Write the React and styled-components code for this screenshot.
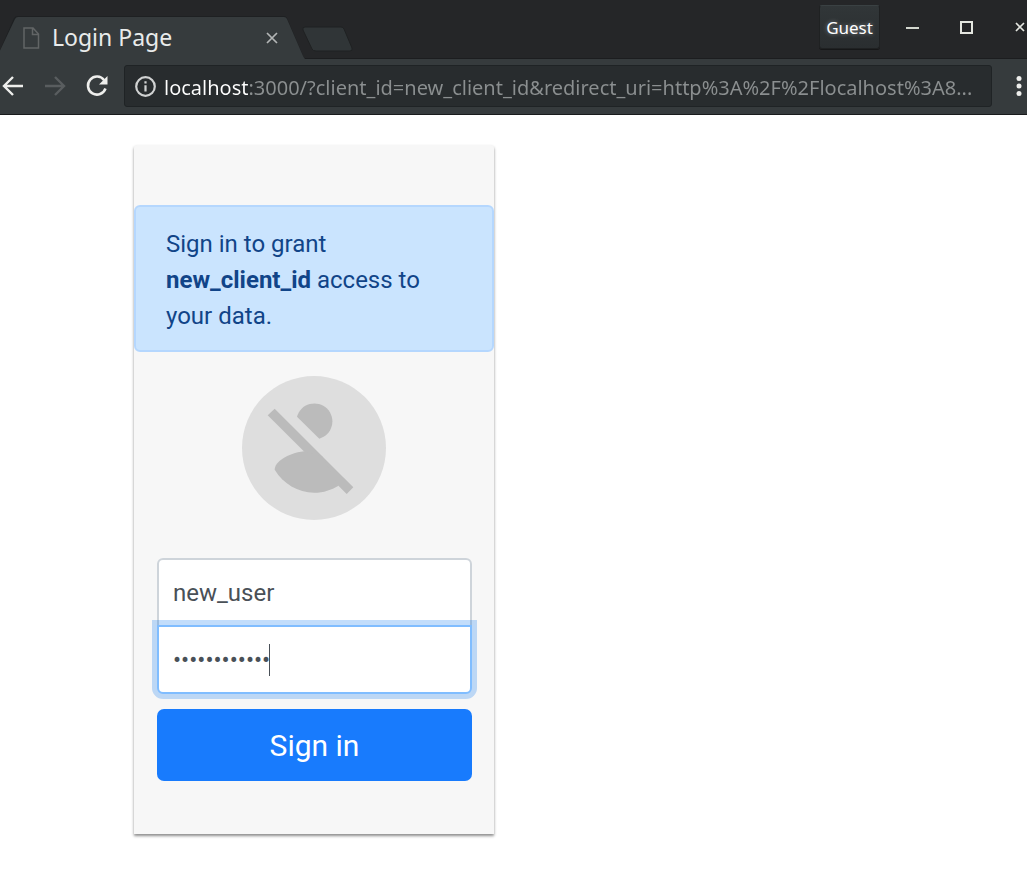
import React, { useState } from "react";
import styled, { createGlobalStyle } from "styled-components";

const GlobalStyle = createGlobalStyle`
  *, *::before, *::after { box-sizing: border-box; }
  body { margin: 0; background: #fff; font-family: Roboto, "Liberation Sans", sans-serif; }
  button, input { font: inherit; margin: 0; }
`;

/* Browser chrome */
const Chrome = styled.header`
  overflow: hidden;
  background: #363b3d;
  border-bottom: 1px solid #191b1c;
  font-family: "Noto Sans", sans-serif;
`;

const TitleBar = styled.div`
  display: flex;
  justify-content: space-between;
  height: 59px;
  background: #252628;
  box-shadow: inset 0 -1px #1c1d1f;
`;

const TabStrip = styled.div`
  display: flex;
  align-items: flex-end;
`;

const Tab = styled.div`
  position: relative;
  display: flex;
  align-items: center;
  gap: 12px;
  width: 306px;
  height: 43px;
  padding: 0 24px 0 23px;
`;

const TabShape = styled.svg`
  position: absolute;
  inset: 0;
`;

const PageIcon = styled.svg`
  position: relative;
  flex: none;
`;

const TabTitle = styled.span`
  position: relative;
  flex: 1;
  color: #e9ebeb;
  font-size: 23px;
  line-height: 43px;
  white-space: nowrap;
`;

const IconButton = styled.button`
  position: relative;
  display: flex;
  align-items: center;
  justify-content: center;
  flex: none;
  width: ${(p) => p.$width}px;
  height: 42px;
  padding: 0;
  border: 0;
  background: none;
  color: ${(p) => p.$color || "#eeeeec"};

  svg { flex: none; }
`;

const NewTab = styled(IconButton)`
  height: 40px;
  align-self: flex-end;
`;

const WindowControls = styled.div`
  display: flex;
  align-items: flex-start;
  gap: 5px;
  margin-right: -20px;
  padding-top: 5px;
`;

const ControlGroup = styled.div`
  display: flex;
  align-items: center;
  height: 44px;
`;

const GuestButton = styled.button`
  width: 61px;
  height: 44px;
  padding: 0;
  border: 1px solid #1f2122;
  border-top-color: #3a4143;
  border-radius: 3px;
  background: linear-gradient(#313638, #2a2e30);
  box-shadow: 0 1px #161718;
  color: #fff;
  font-size: 17px;
  text-shadow: 0 0 4px rgba(255, 255, 255, 0.45);
`;

const Toolbar = styled.div`
  display: flex;
  align-items: flex-start;
  gap: 6px;
  height: 55px;
  margin: 0 -13px 0 -8px;
  padding-top: 6px;
`;

const Nav = styled.nav`
  display: flex;
`;

const AddressBar = styled.label`
  display: flex;
  align-items: center;
  gap: 8px;
  flex: 1;
  min-width: 0;
  height: 42px;
  padding: 0 10px;
  border: 1px solid #1f2325;
  border-radius: 3px;
  background: #282c2e;
`;

const AddressInput = styled.input`
  flex: 1;
  min-width: 0;
  height: 40px;
  padding: 2px 0 0;
  border: 0;
  outline: 0;
  background: linear-gradient(to right, #fff 84px, #8b8f90 84px);
  background-clip: text;
  -webkit-background-clip: text;
  color: transparent;
  font-size: 20px;
  text-overflow: ellipsis;
`;

/* Login page */
const Page = styled.main`
  padding: 30px 24px 48px 134px;
`;

const Card = styled.section`
  width: 100%;
  max-width: 360px;
  padding: 60px 0 53px;
  border-radius: 3px 3px 0 0;
  background: #f7f7f7;
  box-shadow: 0 2px 3px rgba(0, 0, 0, 0.45);
`;

const Notice = styled.p`
  margin: 0 0 24px;
  padding: 19px 30px 16px;
  border: 2px solid #b5d7fe;
  border-radius: 6px;
  background: #cae4fe;
  color: #114488;
  font-size: 24px;
  line-height: 36px;
`;

const Avatar = styled.svg`
  display: block;
  margin: 0 auto 38px;
`;

const Form = styled.form`
  display: flex;
  flex-direction: column;
  margin: 0 22px 0 23px;
`;

const Field = styled.div`
  position: relative;
  margin-top: ${(p) => (p.$joined ? "-2px" : "0")};
`;

const TextInput = styled.input`
  display: block;
  width: 100%;
  height: 69px;
  padding: 0 14px;
  border: 2px solid #ced4da;
  border-radius: ${(p) => (p.$last ? "0 0 6px 6px" : "6px 6px 0 0")};
  outline: 0;
  background: #fff;
  caret-color: transparent;
  color: #495057;
  font-size: 24px;

  ${(p) =>
    p.$active &&
    `
    border-color: #80bdff;
    box-shadow: 0 0 0 5px rgba(0, 112, 240, 0.24);
  `}
`;

const Caret = styled.span`
  position: absolute;
  top: 19px;
  left: 112px;
  width: 1px;
  height: 32px;
  background: #495057;
`;

const SubmitButton = styled.button`
  height: 72px;
  margin-top: 15px;
  padding: 0;
  border: 0;
  border-radius: 7px;
  background: #187bfd;
  color: #fff;
  font-size: 30px;
`;

function BrowserChrome() {
  const [url, setUrl] = useState(
    "localhost:3000/?client_id=new_client_id&redirect_uri=http%3A%2F%2Flocalhost%3A8..."
  );
  return (
    <Chrome>
      <TitleBar>
        <TabStrip>
          <Tab>
            <TabShape width="306" height="43" viewBox="0 0 306 43" aria-hidden="true">
              <path d="M-4 43 L14 2 Q15 0 18 0 H284 Q286 0 287 2 L303 40 Q304 43 306 43 Z" fill="#1e2022" />
              <path d="M-4 43 L15 3 Q16 1 18 1 H284 Q286 1 287 3 L303 40 Q304 42 305 43 Z" fill="#363b3d" />
            </TabShape>
            <PageIcon width="17" height="22" viewBox="0 0 17 22" fill="none" stroke="#626566" strokeWidth="1.5" aria-hidden="true">
              <path d="M1 1H10L15.5 7V21H1ZM9.5 1V7.5H15.5" />
            </PageIcon>
            <TabTitle>Login Page</TabTitle>
            <IconButton $width={20} $color="#b3b6b6" aria-label="Close tab">
              <svg width="12" height="12" viewBox="0 0 12 12" stroke="currentColor" strokeWidth="1.7">
                <path d="M1 1L11 11M11 1L1 11" />
              </svg>
            </IconButton>
          </Tab>
          <NewTab $width={44} aria-label="New tab">
            <svg width="52" height="26" viewBox="0 0 52 26">
              <path d="M3 1H39Q41 1 42 3L50 22Q51 25 48 25H14Q11 25 10 23L1 4Q0 1 3 1Z" fill="#303537" stroke="#1f2122" />
            </svg>
          </NewTab>
        </TabStrip>
        <WindowControls>
          <GuestButton type="button">Guest</GuestButton>
          <ControlGroup>
            <IconButton $width={54} $color="#d3d7cf" aria-label="Minimize">
              <svg width="13" height="13" viewBox="0 0 13 13" fill="currentColor">
                <path d="M0 6H13V8H0Z" />
              </svg>
            </IconButton>
            <IconButton $width={54} $color="#e4e6e0" aria-label="Maximize">
              <svg width="13" height="13" viewBox="0 0 13 13" fill="none" stroke="currentColor" strokeWidth="2">
                <path d="M1 1H12V12H1Z" />
              </svg>
            </IconButton>
            <IconButton $width={54} $color="#e4e6e0" aria-label="Close window">
              <svg width="10" height="10" viewBox="0 0 10 10" stroke="currentColor" strokeWidth="1.7">
                <path d="M1 1L9 9M9 1L1 9" />
              </svg>
            </IconButton>
          </ControlGroup>
        </WindowControls>
      </TitleBar>
      <Toolbar>
        <Nav aria-label="Browser">
          <IconButton $width={42} aria-label="Back">
            <svg width="22" height="22" viewBox="0 0 22 22" fill="none" stroke="currentColor" strokeWidth="2.4">
              <path d="M21 11H3M11 2L2 11L11 20" />
            </svg>
          </IconButton>
          <IconButton $width={42} $color="#595d5f" aria-label="Forward">
            <svg width="22" height="22" viewBox="0 0 22 22" fill="none" stroke="currentColor" strokeWidth="2.4">
              <path d="M1 11H19M11 2L20 11L11 20" />
            </svg>
          </IconButton>
          <IconButton $width={42} aria-label="Reload">
            <svg width="22" height="22" viewBox="0 0 22 22" fill="none" stroke="currentColor" strokeWidth="2.5">
              <path d="M18.2 5.2A9 9 0 1 0 19.5 13.5" />
              <path d="M21.5 1V9.5H13Z" fill="currentColor" stroke="none" />
            </svg>
          </IconButton>
        </Nav>
        <AddressBar>
          <svg width="21" height="21" viewBox="0 0 21 21" fill="none" stroke="#d0d2d2" strokeWidth="2.2" aria-hidden="true">
            <circle cx="10.5" cy="10.5" r="9.3" />
            <path d="M10.5 9.3V15.6M10.5 5.3V7.6" />
          </svg>
          <AddressInput aria-label="Address" value={url} onChange={(e) => setUrl(e.target.value)} />
        </AddressBar>
        <IconButton $width={42} aria-label="Menu">
          <svg width="6" height="20" viewBox="0 0 6 20" fill="currentColor">
            <circle cx="3" cy="2.5" r="2.5" />
            <circle cx="3" cy="10" r="2.5" />
            <circle cx="3" cy="17.5" r="2.5" />
          </svg>
        </IconButton>
      </Toolbar>
    </Chrome>
  );
}

export default function App() {
  return (
    <>
      <GlobalStyle />
      <BrowserChrome />
      <Page>
        <Card>
          <Notice>
            Sign in to grant <strong>new_client_id</strong> access to your data.
          </Notice>
          <Avatar width="144" height="144" viewBox="0 0 144 144" aria-hidden="true">
            <circle cx="72" cy="72" r="72" fill="#dedede" />
            <g fill="#bbb">
              <path d="M55 40.7A18 18 0 1 1 77.3 62.7Z" />
              <path d="M32.7 32.7L111.3 111.3L104.7 118L25.7 39.3Z" />
              <path d="M62 75.3C45 77.5 32.7 86 32.7 93.7C41 107.5 56 116.7 72 116.7C82 116.7 89 114 96.5 109.7L80 80Z" />
            </g>
          </Avatar>
          <Form onSubmit={(e) => e.preventDefault()}>
            <Field>
              <TextInput type="text" aria-label="Username" defaultValue="new_user" />
            </Field>
            <Field $joined>
              <TextInput type="password" aria-label="Password" defaultValue="abcdefghijkl" $last $active />
              <Caret />
            </Field>
            <SubmitButton type="submit">Sign in</SubmitButton>
          </Form>
        </Card>
      </Page>
    </>
  );
}
